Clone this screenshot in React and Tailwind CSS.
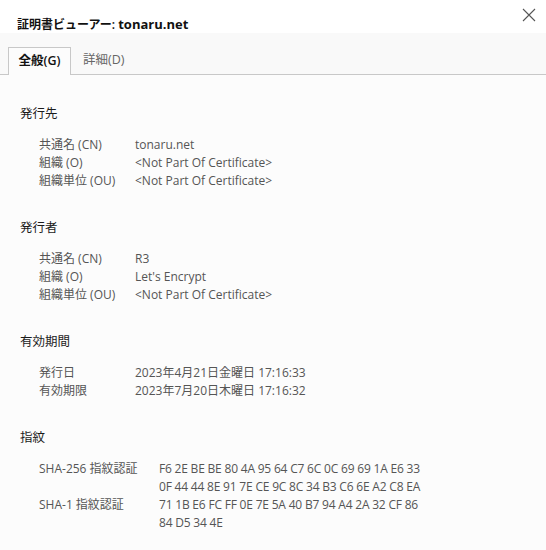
import React from "react";

const font = { fontFamily: '"Open Sans", "Noto Sans CJK JP", sans-serif' };

function Row({ label, value, labelW = "w-[96px]" }) {
  return (
    <div className="flex">
      <div className={`${labelW} shrink-0`}>{label}</div>
      <div>{value}</div>
    </div>
  );
}

function Section({ title, children }) {
  return (
    <div className="mb-[29px]">
      <div className="text-[#1b1b1b] text-[12.5px] leading-[18px]">{title}</div>
      <div className="mt-[13px] pl-[19px] text-[#555] text-[12px] leading-[18px]">{children}</div>
    </div>
  );
}

export default function App() {
  return (
    <div className="w-[546px] h-[550px] bg-[#fcfcfc] overflow-hidden" style={font}>
      <div className="h-[33px] bg-white flex items-start justify-between">
        <div className="pl-[17px] pt-[15px] text-[12px] leading-[18px] text-[#111] font-semibold">
          証明書ビューアー: <span className="font-bold text-[13px]">tonaru.net</span>
        </div>
        <svg className="mt-[8px] mr-[10px]" width="14" height="14" viewBox="0 0 14 14">
          <path d="M1 1 L13 13 M13 1 L1 13" stroke="#555" strokeWidth="1.1" fill="none" />
        </svg>
      </div>
      <div className="h-[42px] bg-[#f9f9f9] border-b border-[#c8c8c8] flex items-end pl-[8px]">
        <div className="h-[28px] w-[63px] -mb-px bg-[#fcfcfc] border border-b-0 border-[#c8c8c8] flex items-center justify-center text-[12.5px] font-semibold text-[#111]">
          全般(G)
        </div>
        <div className="h-[28px] ml-[12px] flex items-center text-[12.5px] text-[#666]">詳細(D)</div>
      </div>
      <div className="pl-[20px] pt-[30px]">
        <Section title="発行先">
          <Row label="共通名 (CN)" value="tonaru.net" />
          <Row label="組織 (O)" value="<Not Part Of Certificate>" />
          <Row label="組織単位 (OU)" value="<Not Part Of Certificate>" />
        </Section>
        <Section title="発行者">
          <Row label="共通名 (CN)" value="R3" />
          <Row label="組織 (O)" value="Let's Encrypt" />
          <Row label="組織単位 (OU)" value="<Not Part Of Certificate>" />
        </Section>
        <Section title="有効期間">
          <Row label="発行日" value="2023年4月21日金曜日 17:16:33" />
          <Row label="有効期限" value="2023年7月20日木曜日 17:16:32" />
        </Section>
        <Section title="指紋">
          <Row
            labelW="w-[120px]"
            label="SHA-256 指紋認証"
            value={
              <div className="tracking-[-0.2px]">
                <div>F6 2E BE BE 80 4A 95 64 C7 6C 0C 69 69 1A E6 33</div>
                <div>0F 44 44 8E 91 7E CE 9C 8C 34 B3 C6 6E A2 C8 EA</div>
              </div>
            }
          />
          <Row
            labelW="w-[120px]"
            label="SHA-1 指紋認証"
            value={
              <div className="tracking-[-0.2px]">
                <div>71 1B E6 FC FF 0E 7E 5A 40 B7 94 A4 2A 32 CF 86</div>
                <div>84 D5 34 4E</div>
              </div>
            }
          />
        </Section>
      </div>
    </div>
  );
}
